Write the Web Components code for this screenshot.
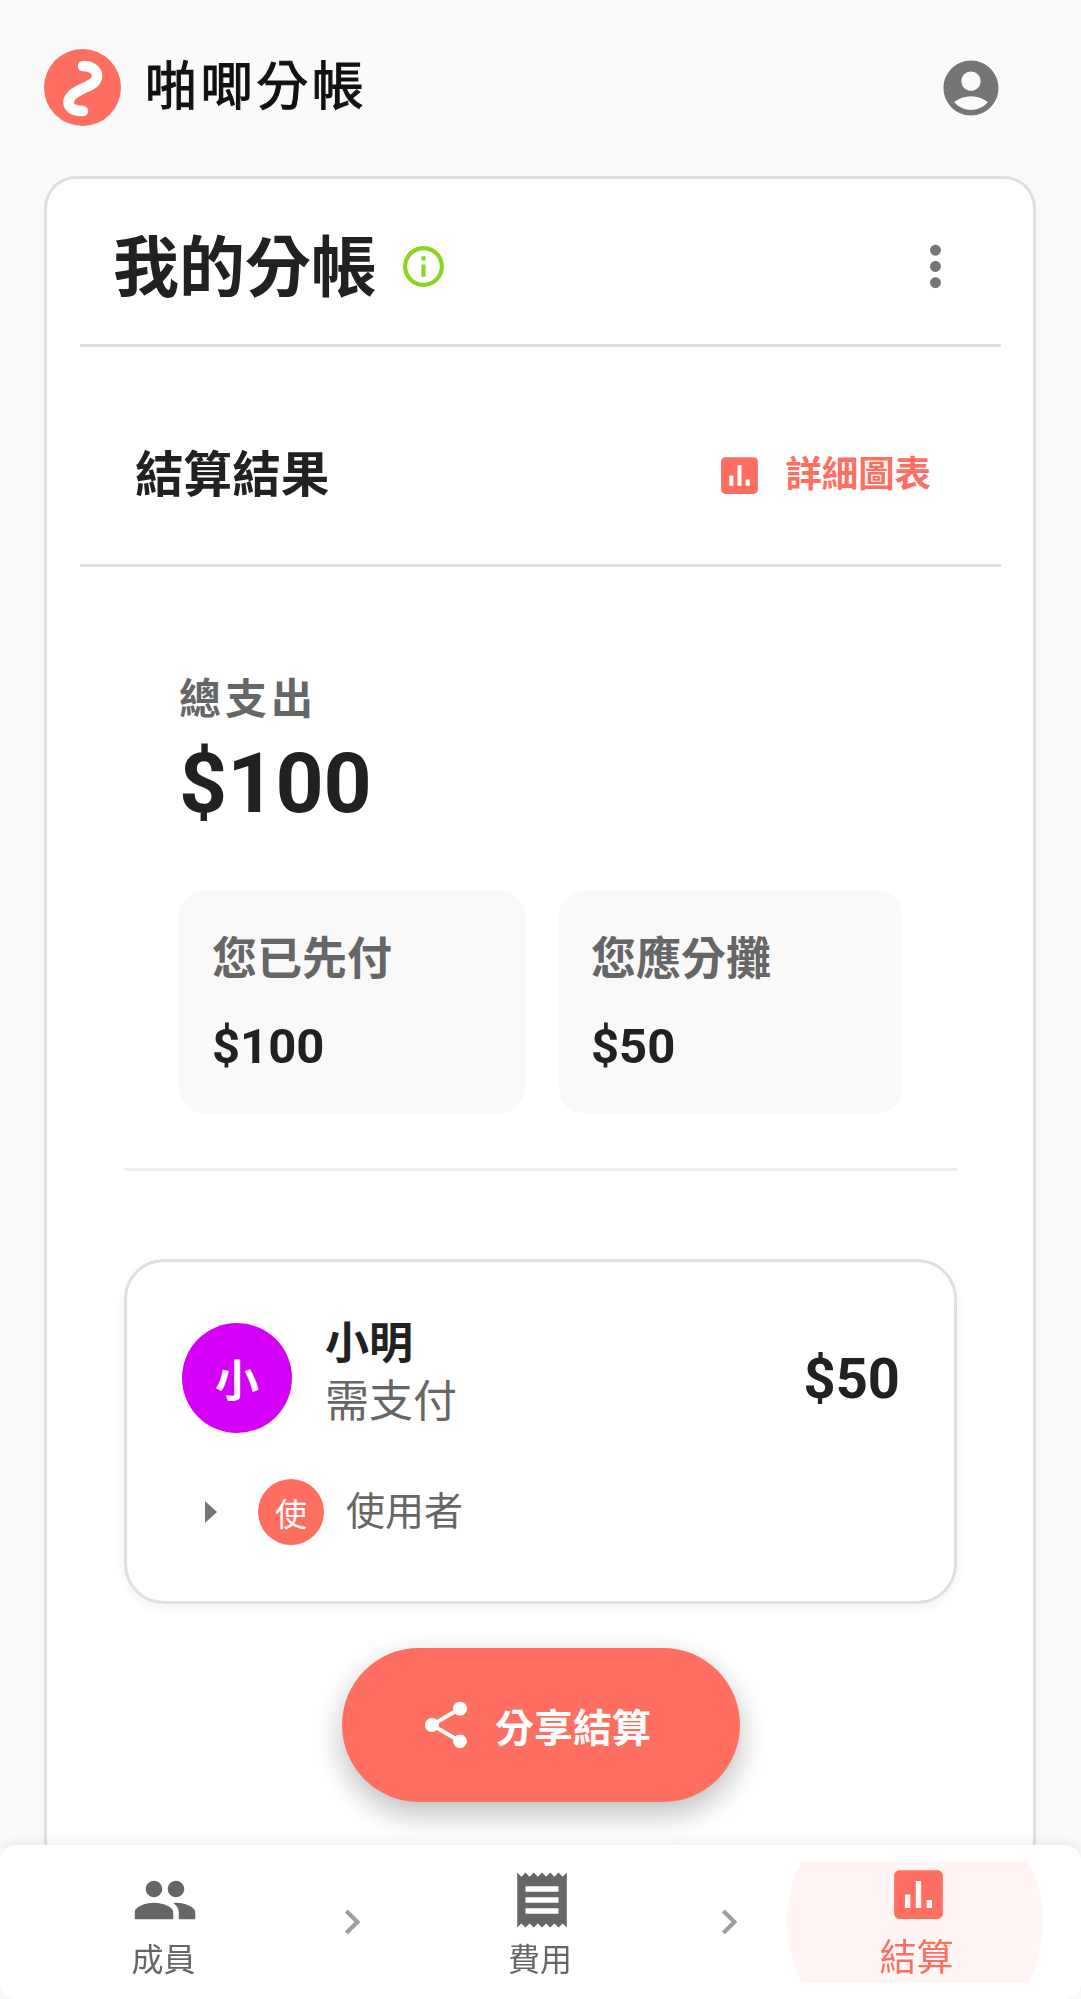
<!DOCTYPE html>
<html lang="zh-Hant">
<head>
<meta charset="utf-8">
<title>啪唧分帳</title>
<style>
html, body { margin: 0; height: 100%; overflow: hidden; }
body {
  background: #fafafa;
  color: #212121;
  font-family: Roboto, "Noto Sans CJK TC", sans-serif;
}
</style>
</head>
<body>
<app-shell>
  <app-header></app-header>
  <split-card>
    <split-title></split-title>
    <result-bar></result-bar>
    <result-summary></result-summary>
    <member-card></member-card>
    <share-button></share-button>
  </split-card>
</app-shell>
<bottom-nav></bottom-nav>

<script>
const CORAL = '#ff6f61';

class AppShell extends HTMLElement {
  constructor() {
    super();
    this.attachShadow({ mode: 'open' });
    this.shadowRoot.innerHTML = `
<style>
:host { display: flex; flex-direction: column; height: 100vh; padding: 49px 45px 0 44px; box-sizing: border-box; }
</style>
<slot></slot>`;
  }
}

class AppHeader extends HTMLElement {
  constructor() {
    super();
    this.attachShadow({ mode: 'open' });
    this.shadowRoot.innerHTML = `
<style>
:host { display: flex; align-items: center; height: 77px; padding-right: 32px; margin-bottom: 50px; }
svg { display: block; flex: none; }
h1 { margin: 0 0 0 24px; flex: 1; font-size: 52px; line-height: 77px; font-weight: 400; -webkit-text-stroke: 1.1px #111; letter-spacing: 3.6px; color: #111; }
</style>
<svg class="logo" width="77" height="77" viewBox="0 0 77 77">
  <circle cx="38.5" cy="38.5" r="38.5" fill="${CORAL}"/>
  <path d="M39 17 C48 17 54 22 53 28 C52 35 44 37 36 41 C28 45 23 50 25 56 C27 61 33 62 39 62" fill="none" stroke="#fff" stroke-width="10.5" stroke-linecap="round"/>
</svg>
<h1>啪唧分帳</h1>
<svg width="66" height="66" viewBox="0 0 24 24" fill="#757575">
  <path d="M12 2C6.48 2 2 6.48 2 12s4.48 10 10 10 10-4.48 10-10S17.52 2 12 2zm0 4c1.93 0 3.5 1.57 3.5 3.5S13.93 13 12 13s-3.5-1.57-3.5-3.5S10.07 6 12 6zm0 14c-2.03 0-4.43-.82-6.14-2.88C7.55 15.8 9.68 15 12 15s4.45.8 6.14 2.12C16.43 19.18 14.03 20 12 20z"/>
</svg>`;
  }
}

class SplitCard extends HTMLElement {
  constructor() {
    super();
    this.attachShadow({ mode: 'open' });
    this.shadowRoot.innerHTML = `
<style>
:host { display: block; flex: 1; box-sizing: border-box; background: #fff; border: 3px solid #e0e0e0; border-bottom: 0; border-radius: 32px 32px 0 0; padding: 0 32px 0 33px; }
</style>
<slot></slot>`;
  }
}

class SplitTitle extends HTMLElement {
  constructor() {
    super();
    this.attachShadow({ mode: 'open' });
    this.shadowRoot.innerHTML = `
<style>
:host { display: flex; align-items: center; height: 165px; padding: 0 33px; border-bottom: 3px solid #e0e0e0; }
h2 { margin: 0; font-size: 66px; font-weight: 700; color: #212121; }
svg { display: block; flex: none; margin-top: 10px; }
.info { margin-left: 22px; }
.grow { flex: 1; }
</style>
<h2>我的分帳</h2>
<svg class="info" width="49" height="49" viewBox="0 0 24 24" fill="#8bd421">
  <path d="M11 7h2v2h-2zm0 4h2v6h-2zm1-9C6.48 2 2 6.48 2 12s4.48 10 10 10 10-4.48 10-10S17.52 2 12 2zm0 18c-4.41 0-8-3.59-8-8s3.59-8 8-8 8 3.59 8 8-3.59 8-8 8z"/>
</svg>
<span class="grow"></span>
<svg width="65" height="65" viewBox="0 0 24 24" fill="#757575">
  <path d="M12 8c1.1 0 2-.9 2-2s-.9-2-2-2-2 .9-2 2 .9 2 2 2zm0 2c-1.1 0-2 .9-2 2s.9 2 2 2 2-.9 2-2-.9-2-2-2zm0 6c-1.1 0-2 .9-2 2s.9 2 2 2 2-.9 2-2-.9-2-2-2z"/>
</svg>`;
  }
}

class ResultBar extends HTMLElement {
  constructor() {
    super();
    this.attachShadow({ mode: 'open' });
    this.shadowRoot.innerHTML = `
<style>
:host { display: flex; align-items: center; height: 179px; padding: 38px 70px 0 55px; border-bottom: 3px solid #e0e0e0; }
h3 { margin: -8px 0 0; flex: 1; font-size: 48.6px; font-weight: 700; color: #212121; }
svg { display: block; flex: none; margin: 2px 21px 0 0; }
span { margin-top: -8px; font-size: 36.4px; font-weight: 700; color: ${CORAL}; }
</style>
<h3>結算結果</h3>
<svg width="49" height="49" viewBox="0 0 24 24" fill="${CORAL}">
  <path d="M19 3H5c-1.1 0-2 .9-2 2v14c0 1.1.9 2 2 2h14c1.1 0 2-.9 2-2V5c0-1.1-.9-2-2-2zM9 17H7v-5h2v5zm4 0h-2V7h2v10zm4 0h-2v-3h2v3z"/>
</svg>
<span>詳細圖表</span>`;
  }
}

class StatBox extends HTMLElement {
  constructor() {
    super();
    this.attachShadow({ mode: 'open' });
    this.shadowRoot.innerHTML = `
<style>
:host { display: block; box-sizing: border-box; height: 222px; padding: 39px 33px 0; background: #f9f9f9; border-radius: 24px; }
:host(:last-child) { padding-left: 32px; }
.label { font-size: 45px; font-weight: 700; line-height: 60px; color: #666; }
.value { font-size: 49px; font-weight: 700; line-height: 56px; margin-top: 29px; color: #212121; }
</style>
<div class="label"></div>
<div class="value"></div>`;
    this.shadowRoot.querySelector('.label').textContent = this.getAttribute('label');
    this.shadowRoot.querySelector('.value').textContent = this.getAttribute('value');
  }
}

class ResultSummary extends HTMLElement {
  constructor() {
    super();
    this.attachShadow({ mode: 'open' });
    this.shadowRoot.innerHTML = `
<style>
:host { display: block; padding: 105px 44px 0; }
.inner { padding: 0 54px 0 55px; }
.total-label { font-size: 42px; line-height: 56px; font-weight: 700; color: #666; letter-spacing: 4px; }
.total { font-size: 84px; line-height: 100px; font-weight: 700; color: #212121; margin: 6px 0 57px; }
.boxes { display: grid; grid-template-columns: 346px 343px; gap: 34px; }
hr { border: 0; border-top: 3px solid #eee; margin: 55px 0 0; }
</style>
<div class="inner">
  <div class="total-label">總支出</div>
  <div class="total">$100</div>
  <div class="boxes">
    <stat-box label="您已先付" value="$100"></stat-box>
    <stat-box label="您應分攤" value="$50"></stat-box>
  </div>
</div>
<hr>`;
  }
}

class MemberCard extends HTMLElement {
  constructor() {
    super();
    this.attachShadow({ mode: 'open' });
    this.shadowRoot.innerHTML = `
<style>
:host { display: block; box-sizing: border-box; height: 345px; margin: 88px 44px 0; padding: 61px 54px 0 55px; background: #fff; border: 3px solid #e0e0e0; border-radius: 40px; box-shadow: 0 4px 12px rgba(0,0,0,.05); }
.row { display: flex; align-items: center; }
.avatar { width: 110px; height: 110px; border-radius: 50%; background: #d500f9; color: #fff; display: flex; align-items: center; justify-content: center; font-size: 44px; font-weight: 700; flex: none; }
.who { flex: 1; margin: -8px 0 0 33px; }
.name { font-size: 44px; font-weight: 700; line-height: 50px; color: #212121; }
.sub { font-size: 44px; line-height: 56px; margin-top: 5px; color: #666; }
.amount { margin-top: 2px; font-size: 56px; font-weight: 700; color: #212121; }
.payer { display: flex; align-items: center; margin-top: 46px; padding-left: 23px; }
.arrow { width: 0; height: 0; border-left: 12px solid #757575; border-top: 11px solid transparent; border-bottom: 11px solid transparent; margin-right: 41px; }
.small { width: 66px; height: 66px; border-radius: 50%; background: ${CORAL}; color: #fff; display: flex; align-items: center; justify-content: center; font-size: 32px; flex: none; }
.payer-name { margin: -8px 0 0 22px; font-size: 39px; color: #666; }
</style>
<div class="row">
  <div class="avatar">小</div>
  <div class="who"><div class="name">小明</div><div class="sub">需支付</div></div>
  <div class="amount">$50</div>
</div>
<div class="payer">
  <span class="arrow"></span>
  <span class="small">使</span>
  <span class="payer-name">使用者</span>
</div>`;
  }
}

class ShareButton extends HTMLElement {
  constructor() {
    super();
    this.attachShadow({ mode: 'open' });
    this.shadowRoot.innerHTML = `
<style>
:host { display: flex; justify-content: center; margin-top: 44px; }
button { display: flex; align-items: center; justify-content: center; width: 398px; height: 154px; border: 0; padding: 0 12px 0 0; border-radius: 77px; background: ${CORAL}; color: #fff; font: 700 39px Roboto, "Noto Sans CJK TC", sans-serif; box-shadow: 0 12px 30px rgba(0,0,0,.26); }
svg { display: block; margin-right: 21px; }
</style>
<button>
  <svg width="56" height="56" viewBox="0 0 24 24" fill="#fff">
    <path d="M18 16.08c-.76 0-1.44.3-1.96.77L8.91 12.7c.05-.23.09-.46.09-.7s-.04-.47-.09-.7l7.05-4.11c.54.5 1.25.81 2.04.81 1.66 0 3-1.34 3-3s-1.34-3-3-3-3 1.34-3 3c0 .24.04.47.09.7L8.04 9.81C7.5 9.31 6.79 9 6 9c-1.66 0-3 1.34-3 3s1.34 3 3 3c.79 0 1.5-.31 2.04-.81l7.12 4.16c-.05.21-.08.43-.08.65 0 1.61 1.31 2.92 2.92 2.92s2.92-1.31 2.92-2.92-1.31-2.92-2.92-2.92z"/>
  </svg>
  分享結算
</button>`;
  }
}

class NavItem extends HTMLElement {
  constructor() {
    super();
    this.attachShadow({ mode: 'open' });
    this.shadowRoot.innerHTML = `
<style>
:host { display: flex; flex-direction: column; align-items: center; box-sizing: border-box; width: 256px; height: 122px; padding: 6px 0 0 3px; color: #666; font-size: 32px; }
:host([active]) { padding-top: 1px; background: #fff5f4; clip-path: ellipse(128px 131px at 50% 50%); color: ${CORAL}; font-size: 37px; }
::slotted(svg) { display: block; margin-left: 3px; }
span { line-height: 44px; margin-top: 5px; }
:host([active]) span { margin-top: 10px; }
</style>
<slot></slot>
<span></span>`;
    this.shadowRoot.querySelector('span').textContent = this.getAttribute('label');
  }
}

class BottomNav extends HTMLElement {
  constructor() {
    super();
    this.attachShadow({ mode: 'open' });
    this.shadowRoot.innerHTML = `
<style>
:host { position: fixed; left: 0; right: 0; bottom: 0; height: 154px; box-sizing: border-box; background: #fff; border-radius: 16px; display: flex; align-items: center; justify-content: space-between; padding: 0 38px 0 34px; box-shadow: 0 -4px 12px rgba(0,0,0,.06); }
.chev { flex: none; display: block; margin: 0 -2px 0 2px; }
</style>
<nav-item label="成員"><svg width="66" height="66" viewBox="0 0 24 24" fill="#666"><path d="M16 11c1.66 0 2.99-1.34 2.99-3S17.66 5 16 5c-1.66 0-3 1.34-3 3s1.34 3 3 3zm-8 0c1.66 0 2.99-1.34 2.99-3S9.66 5 8 5C6.34 5 5 6.34 5 8s1.34 3 3 3zm0 2c-2.33 0-7 1.17-7 3.5V19h14v-2.5c0-2.33-4.67-3.5-7-3.5zm8 0c-.29 0-.62.02-.97.05 1.16.84 1.97 1.97 1.97 3.45V19h6v-2.5c0-2.33-4.67-3.5-7-3.5z"/></svg></nav-item>
<svg class="chev" width="50" height="50" viewBox="0 0 24 24" fill="#9e9e9e"><path d="M10 6L8.59 7.41 13.17 12l-4.58 4.59L10 18l6-6z"/></svg>
<nav-item label="費用"><svg width="66" height="66" viewBox="0 0 24 24" fill="#666"><path d="M18 17H6v-2h12v2zm0-4H6v-2h12v2zm0-4H6V7h12v2zM3 22l1.5-1.5L6 22l1.5-1.5L9 22l1.5-1.5L12 22l1.5-1.5L15 22l1.5-1.5L18 22l1.5-1.5L21 22V2l-1.5 1.5L18 2l-1.5 1.5L15 2l-1.5 1.5L12 2l-1.5 1.5L9 2 7.5 3.5 6 2 4.5 3.5 3 2v20z"/></svg></nav-item>
<svg class="chev" width="50" height="50" viewBox="0 0 24 24" fill="#9e9e9e"><path d="M10 6L8.59 7.41 13.17 12l-4.58 4.59L10 18l6-6z"/></svg>
<nav-item label="結算" active><svg width="65" height="65" viewBox="0 0 24 24" fill="${CORAL}"><path d="M19 3H5c-1.1 0-2 .9-2 2v14c0 1.1.9 2 2 2h14c1.1 0 2-.9 2-2V5c0-1.1-.9-2-2-2zM9 17H7v-5h2v5zm4 0h-2V7h2v10zm4 0h-2v-3h2v3z"/></svg></nav-item>`;
  }
}

customElements.define('app-shell', AppShell);
customElements.define('app-header', AppHeader);
customElements.define('split-card', SplitCard);
customElements.define('split-title', SplitTitle);
customElements.define('result-bar', ResultBar);
customElements.define('stat-box', StatBox);
customElements.define('result-summary', ResultSummary);
customElements.define('member-card', MemberCard);
customElements.define('share-button', ShareButton);
customElements.define('nav-item', NavItem);
customElements.define('bottom-nav', BottomNav);
</script>
</body>
</html>
